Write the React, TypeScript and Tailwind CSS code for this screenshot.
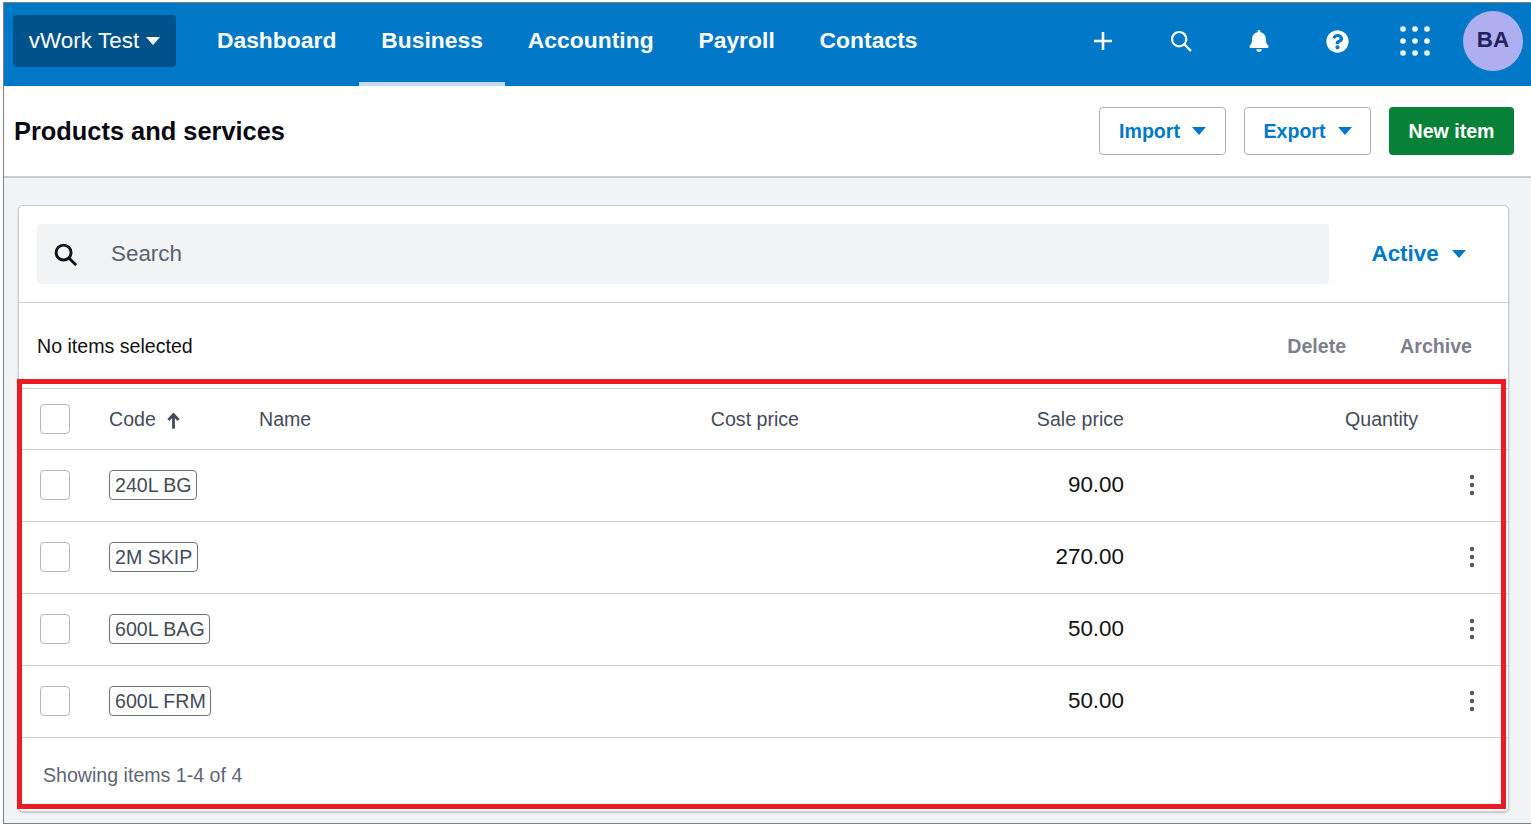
import { FaBell, FaQuestionCircle } from "react-icons/fa";

const ROW_GRID = "grid grid-cols-[90px_150px_260px_280px_325px_294px_90px] items-center";

const NAV_LINKS = ["Dashboard", "Business", "Accounting", "Payroll", "Contacts"];

const ITEMS = [
  { code: "240L BG", sale: "90.00" },
  { code: "2M SKIP", sale: "270.00" },
  { code: "600L BAG", sale: "50.00" },
  { code: "600L FRM", sale: "50.00" },
];

function Caret({ className }: { className: string }) {
  return (
    <svg viewBox="0 0 14 8" className={className} fill="currentColor">
      <path d="M0 0h14L7 8z" />
    </svg>
  );
}

function SearchIcon({ className, weight = 2.4 }: { className: string; weight?: number }) {
  return (
    <svg viewBox="0 0 24 24" className={className} fill="none" stroke="currentColor" strokeWidth={weight} strokeLinecap="round">
      <circle cx="10" cy="10" r="7.8" />
      <path d="M15.8 15.8l6.4 6.4" />
    </svg>
  );
}

function AppsIcon() {
  const dots = [3, 15, 27];
  return (
    <svg viewBox="0 0 30 30" className="h-[30px] w-[30px]" fill="currentColor">
      {dots.map((y) => dots.map((x) => <circle key={`${x}-${y}`} cx={x} cy={y} r="2.8" />))}
    </svg>
  );
}

function Checkbox() {
  return <div className="ml-[21px] h-[30px] w-[30px] rounded-[4px] border border-[#b4b6bd] bg-white" />;
}

function OutlineButton({ label }: { label: string }) {
  return (
    <button className="flex h-[48px] w-[127px] items-center justify-center gap-[12px] rounded-[4px] border border-[#aeb0b8] bg-white text-[19.6px] font-bold text-[#0078c8]">
      <span className="pt-[2px]">{label}</span>
      <Caret className="h-[8px] w-[14px]" />
    </button>
  );
}

export default function App() {
  return (
    <div className="relative h-[824px] overflow-hidden bg-white font-['Liberation_Sans',Arial,sans-serif]">
      <div className="ml-[3px] mt-[2px] flex h-[822px] flex-col border-y border-l border-[#808080] bg-[#f1f3f5]">

        {/* Top nav */}
        <nav className="flex h-[83px] shrink-0 items-center bg-[#0078c8] pl-[9px] text-white">
          <button className="mb-[7px] flex h-[52px] w-[163px] items-center justify-center gap-[7px] rounded-[4px] bg-[#00538a] text-[22.4px] tracking-[0.05px]">
            vWork Test
            <Caret className="h-[8px] w-[14px]" />
          </button>
          <div className="ml-[18.5px] flex h-full">
            {NAV_LINKS.map((link) => (
              <a
                key={link}
                className={`flex items-center border-b-[4px] px-[22.4px] pb-[4px] text-[22.8px] font-bold tracking-[0.05px] ${
                  link === "Business" ? "border-[#bfdcf0]" : "border-transparent"
                }`}
              >
                {link}
              </a>
            ))}
          </div>
          <div className="mb-[7px] ml-auto mr-[8px] flex items-center">
            <div className="flex w-[78px] justify-center">
              <svg viewBox="0 0 20 20" className="h-[20px] w-[20px]" fill="none" stroke="currentColor" strokeWidth="2.6">
                <path d="M10 1v18M1 10h18" />
              </svg>
            </div>
            <div className="flex w-[78px] justify-center">
              <SearchIcon className="h-[22px] w-[22px]" />
            </div>
            <div className="flex w-[78px] justify-center">
              <FaBell className="h-[22px] w-[22px]" />
            </div>
            <div className="flex w-[78px] justify-center">
              <FaQuestionCircle className="h-[23px] w-[23px]" />
            </div>
            <div className="mr-[9px] flex w-[78px] justify-center">
              <AppsIcon />
            </div>
            <div className="flex h-[60px] w-[60px] items-center justify-center rounded-full bg-[#aeaef0] pb-[2px] text-[22.4px] font-bold text-[#26215c]">
              BA
            </div>
          </div>
        </nav>

        {/* Page header */}
        <header className="flex h-[92px] shrink-0 items-center border-b-2 border-[#c9cbd0] bg-white pl-[10px] pr-[17px]">
          <h1 className="text-[25.4px] font-bold text-[#0a0a14]">Products and services</h1>
          <div className="ml-auto flex gap-[18px]">
            <OutlineButton label="Import" />
            <OutlineButton label="Export" />
            <button className="h-[48px] w-[125px] rounded-[4px] bg-[#078038] pt-[2px] text-[19.6px] font-bold text-white">
              New item
            </button>
          </div>
        </header>

        {/* Card */}
        <div className="ml-[14px] mt-[27px] h-[607px] w-[1491px] rounded-[5px] border border-[#c8c9ce] bg-white shadow-[0_1px_2px_rgba(0,0,0,0.2)]">
          <div className="flex h-[97px] items-center border-b border-[#cfd0d4] pl-[18px]">
            <div className="flex h-[60px] w-[1292px] items-center rounded-[4px] bg-[#f2f3f5] pl-[17px] text-[22.4px] text-[#5c6170]">
              <SearchIcon className="h-[23px] w-[23px] text-[#0f1020]" weight={3} />
              <span className="ml-[34px]">Search</span>
            </div>
            <button className="ml-[42.5px] flex items-center gap-[13px] text-[22.4px] font-bold text-[#0078c8]">
              Active
              <Caret className="h-[8px] w-[14px]" />
            </button>
          </div>

          <div className="flex h-[85px] items-center pl-[18px] pt-[2px] text-[19.6px]">
            <span className="text-[#111]">No items selected</span>
            <div className="ml-auto flex gap-[54px] pr-[36px] font-bold text-[#7d7f8c]">
              <span>Delete</span>
              <span>Archive</span>
            </div>
          </div>

          <div className={`${ROW_GRID} h-[62px] border-y border-[#cfd0d4] text-[19.6px] text-[#444b5a]`}>
            <Checkbox />
            <div className="flex items-center gap-[11px] pt-[2px]">
              Code
              <svg viewBox="0 0 14 18" className="mt-[2px] h-[17px] w-[13px]" fill="none" stroke="currentColor" strokeWidth="3">
                <path d="M7 18V2.5M1.5 8.5L7 2.5l5.5 6" />
              </svg>
            </div>
            <div className="pt-[2px]">Name</div>
            <div className="pt-[2px] text-right">Cost price</div>
            <div className="pt-[2px] text-right">Sale price</div>
            <div className="pt-[2px] text-right">Quantity</div>
            <div />
          </div>

          {ITEMS.map((item) => (
            <div key={item.code} className={`${ROW_GRID} h-[72px] border-b border-[#cfd0d4] pb-[2px]`}>
              <Checkbox />
              <div>
                <span className="inline-block h-[30px] rounded-[4px] border border-[#6f7482] pl-[5px] pr-[4.5px] text-[19.6px] leading-[28px] text-[#444b5a]">
                  {item.code}
                </span>
              </div>
              <div />
              <div />
              <div className="text-right text-[22.4px] text-[#111]">{item.sale}</div>
              <div />
              <div className="flex justify-center pl-[18px]">
                <svg viewBox="0 0 6 22" className="h-[22px] w-[6px] text-[#4f5666]" fill="currentColor">
                  <circle cx="3" cy="3" r="2.2" />
                  <circle cx="3" cy="11" r="2.2" />
                  <circle cx="3" cy="19" r="2.2" />
                </svg>
              </div>
            </div>
          ))}

          <div className="flex h-[73px] items-center pl-[24px] pt-[2px] text-[19.6px] text-[#5f6675]">
            Showing items 1-4 of 4
          </div>
        </div>
      </div>

      {/* Annotation drawn over the screenshot */}
      <div className="pointer-events-none absolute left-[17px] top-[379px] h-[430px] w-[1489px] border-[5px] border-[#ed1c24]" />
    </div>
  );
}
